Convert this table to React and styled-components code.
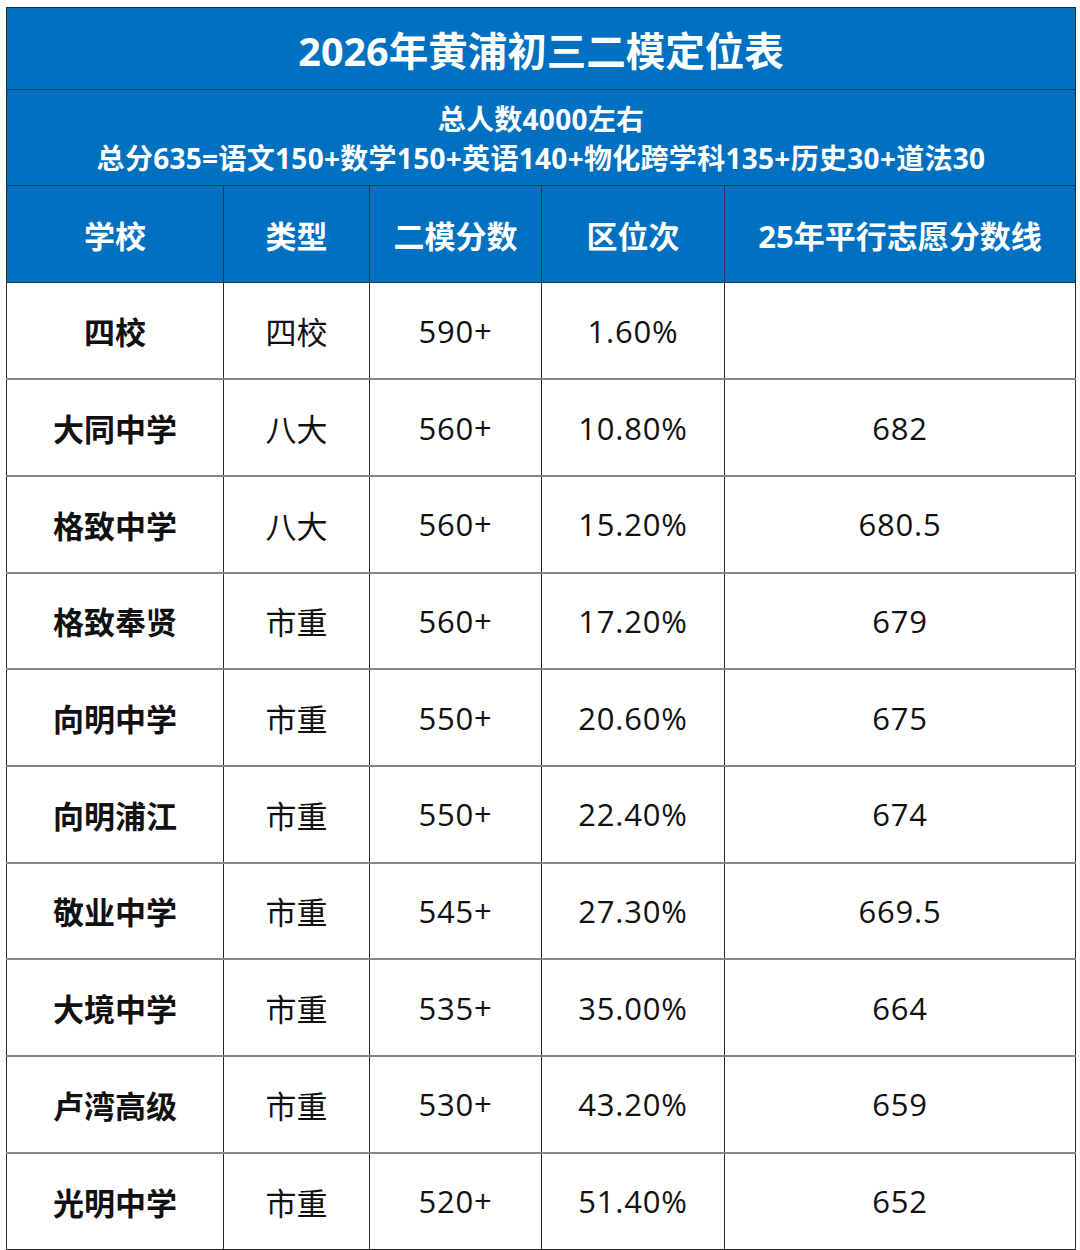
import React from "react";
import styled, { createGlobalStyle } from "styled-components";

const GlobalStyle = createGlobalStyle`
  html, body {
    margin: 0;
    padding: 0;
    background: #fff;
  }
  body {
    font-family: "Open Sans", "Noto Sans CJK SC", sans-serif;
  }
`;

const rows = [
  { school: "四校", type: "四校", score: "590+", rank: "1.60%", line: "" },
  { school: "大同中学", type: "八大", score: "560+", rank: "10.80%", line: "682" },
  { school: "格致中学", type: "八大", score: "560+", rank: "15.20%", line: "680.5" },
  { school: "格致奉贤", type: "市重", score: "560+", rank: "17.20%", line: "679" },
  { school: "向明中学", type: "市重", score: "550+", rank: "20.60%", line: "675" },
  { school: "向明浦江", type: "市重", score: "550+", rank: "22.40%", line: "674" },
  { school: "敬业中学", type: "市重", score: "545+", rank: "27.30%", line: "669.5" },
  { school: "大境中学", type: "市重", score: "535+", rank: "35.00%", line: "664" },
  { school: "卢湾高级", type: "市重", score: "530+", rank: "43.20%", line: "659" },
  { school: "光明中学", type: "市重", score: "520+", rank: "51.40%", line: "652" },
];

const Page = styled.div`
  padding: 7px 5px 0 6px;
`;

const Table = styled.table`
  width: 1069px;
  border-collapse: collapse;
  table-layout: fixed;
  border: 1px solid #2a2a2a;
`;

const BlueRow = styled.tr`
  height: ${(p) => p.$h}px;
  background: #0070c0;
  color: #fff;
`;

const TitleCell = styled.th`
  font-size: 39.5px;
  font-weight: 700;
  text-align: center;
  border-bottom: 1px solid #1d3557;
  padding: 0;
`;

const SubCell = styled.th`
  font-size: 28px;
  font-weight: 700;
  line-height: 39px;
  letter-spacing: 0.3px;
  text-align: center;
  border-bottom: 1px solid #1d3557;
  padding: 2px 0 0;
`;

const HeadCell = styled.th`
  font-size: 31px;
  font-weight: 700;
  text-align: center;
  padding: 0;
  border-left: 1px solid #1d3557;
  border-bottom: 1px solid #1d3557;
  &:first-child {
    border-left: none;
  }
`;

const DataRow = styled.tr`
  height: 96.7px;
  background: #fff;
  color: #111;
  & + & td {
    border-top: 2px solid #858585;
  }
`;

const Cell = styled.td`
  font-size: 31px;
  font-weight: ${(p) => (p.$bold ? 700 : 400)};
  letter-spacing: ${(p) => (p.$num ? "0.8px" : "0")};
  text-align: center;
  padding: 0;
  border-left: 1px solid #2a2a2a;
  &:first-child {
    border-left: none;
  }
`;

export default function App() {
  return (
    <Page>
      <GlobalStyle />
      <Table>
        <colgroup>
          <col style={{ width: 217 }} />
          <col style={{ width: 146 }} />
          <col style={{ width: 172 }} />
          <col style={{ width: 183 }} />
          <col style={{ width: 351 }} />
        </colgroup>
        <thead>
          <BlueRow $h={82}>
            <TitleCell colSpan={5}>2026年黄浦初三二模定位表</TitleCell>
          </BlueRow>
          <BlueRow $h={96}>
            <SubCell colSpan={5}>
              总人数4000左右
              <br />
              总分635=语文150+数学150+英语140+物化跨学科135+历史30+道法30
            </SubCell>
          </BlueRow>
          <BlueRow $h={97}>
            <HeadCell>学校</HeadCell>
            <HeadCell>类型</HeadCell>
            <HeadCell>二模分数</HeadCell>
            <HeadCell>区位次</HeadCell>
            <HeadCell>25年平行志愿分数线</HeadCell>
          </BlueRow>
        </thead>
        <tbody>
          {rows.map((r) => (
            <DataRow key={r.school}>
              <Cell $bold>{r.school}</Cell>
              <Cell>{r.type}</Cell>
              <Cell $num>{r.score}</Cell>
              <Cell $num>{r.rank}</Cell>
              <Cell $num>{r.line}</Cell>
            </DataRow>
          ))}
        </tbody>
      </Table>
    </Page>
  );
}
